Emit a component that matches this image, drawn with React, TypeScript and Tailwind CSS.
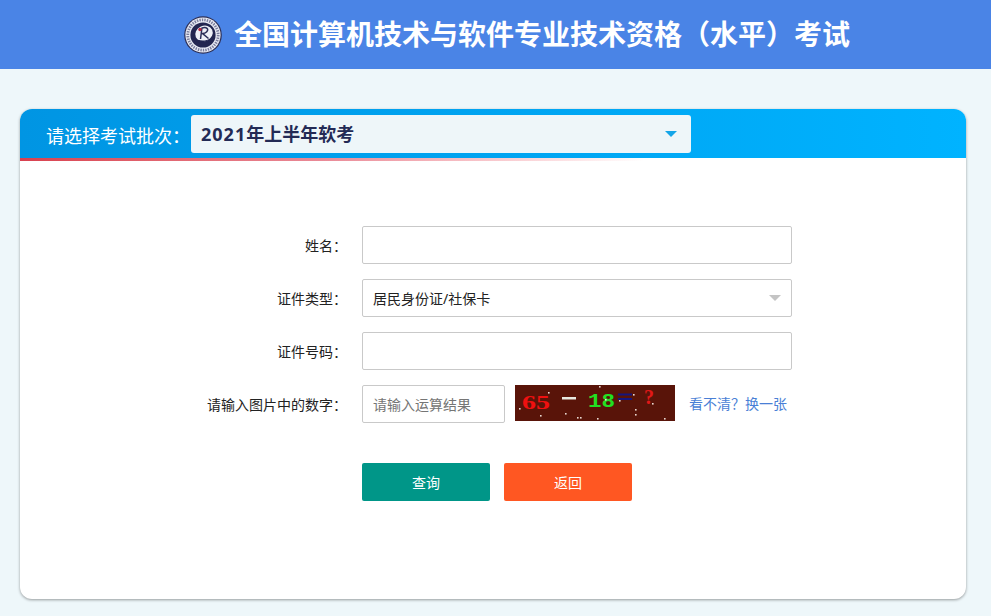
import React from "react";

const font = { fontFamily: '"Noto Sans", "Noto Sans CJK SC", sans-serif' };

function Logo() {
  return (
    <svg width="38" height="38" viewBox="0 0 38 38" className="shrink-0">
      <circle cx="19" cy="19" r="18.8" fill="#2d3058" />
      <circle cx="19" cy="19" r="17.6" fill="#e9ebf4" />
      <circle cx="19" cy="19" r="15.2" fill="none" stroke="#7a7d9c" strokeWidth="2.8" strokeDasharray="1.4 1.1" />
      <circle cx="19" cy="19" r="12.6" fill="#232650" />
      <ellipse cx="20" cy="17.5" rx="9" ry="7.6" fill="#eef0f7" transform="rotate(-25 20 17.5)" />
      <path d="M8.5 22 C12 28 24 29 30.5 17 C28 25 18 26.5 8.5 22Z" fill="#232650" />
      <path d="M18 11.5 L16.5 23 M18 12 C22.5 10.5 25.5 13 22.5 16 C21.5 17 20 17.4 18.4 17.4 L24.5 22.5" fill="none" stroke="#2b2e58" strokeWidth="1.5" />
      <circle cx="16" cy="13.5" r="1.7" fill="#b8283f" />
    </svg>
  );
}

function Captcha() {
  const dots = [[33,7],[90,14],[118,9],[104,15],[4,23],[50,28],[62,32],[82,33],[120,29],[149,33],[84,1],[137,18],[120,24],[25,30],[65,32]];
  return (
    <svg width="160" height="36" viewBox="0 0 160 36" className="shrink-0">
      <rect width="160" height="36" fill="#591409" />
      <text x="7" y="24" textLength="28" lengthAdjust="spacingAndGlyphs" fontFamily="Liberation Serif, serif" fontWeight="700" fontSize="18" fill="#f01010">65</text>
      <rect x="47" y="12" width="14" height="2.5" fill="#e8e8e0" />
      <text x="73" y="22" textLength="27" lengthAdjust="spacingAndGlyphs" fontFamily="Liberation Mono, monospace" fontWeight="700" fontSize="20" fill="#22e022">18</text>
      <rect x="103" y="8.5" width="14" height="2" fill="#15157e" />
      <rect x="103" y="13" width="14" height="2" fill="#15157e" />
      <text x="129" y="19" fontFamily="Liberation Serif, serif" fontWeight="700" fontSize="20" fill="#e01818">?</text>
      {dots.map(([x, y], i) => (
        <rect key={i} x={x} y={y} width="1.6" height="1.6" fill="#e8d8d0" />
      ))}
    </svg>
  );
}

function Row({ label, children }: { label: string; children: React.ReactNode }) {
  return (
    <div className="flex h-[38px] items-center">
      <label className="w-[327px] pt-[1px] text-right text-[14px] leading-[38px] text-[#222]">{label}</label>
      <div className="ml-[15px] flex items-center">{children}</div>
    </div>
  );
}

const inputCls =
  "h-[38px] rounded-[2px] border border-[#c9c9c9] bg-white px-[10px] text-[14px] text-[#222] outline-none";

export default function App() {
  return (
    <div className="min-h-[616px] bg-[#eef7fa]" style={font}>
      <header className="flex h-[69px] items-center bg-[#4a84e6] pl-[184px]">
        <Logo />
        <h1 className="ml-[12px] -mt-[2px] whitespace-nowrap text-[28px] font-bold leading-[38px] text-white">
          全国计算机技术与软件专业技术资格（水平）考试
        </h1>
      </header>

      <main className="px-[20px] pt-[40px]">
        <section className="h-[490px] w-[946px] overflow-hidden rounded-[12px] bg-white shadow-[0_1px_3px_rgba(0,0,0,0.38)]">
          <div className="flex h-[49px] items-start bg-gradient-to-r from-[#0095e3] to-[#00b3ff] pl-[26px] pt-[6px]">
            <span className="mt-[5px] text-[18px] leading-[32px] text-white">请选择考试批次：</span>
            <div className="ml-[1px] flex h-[38px] w-[500px] items-center justify-between rounded-[3px] bg-[#eef6f9] pl-[10px] pr-[14px]">
              <span className="text-[18px] font-bold text-[#232a55]">
                <span className="tracking-[1px]">2021</span>年上半年软考
              </span>
              <span className="h-0 w-0 border-x-[6px] border-t-[6px] border-x-transparent border-t-[#14a5e8]" />
            </div>
          </div>
          <div className="h-[3px] bg-gradient-to-r from-[#d8404f] via-[#e98a97] via-[32%] to-[#ffffff] to-[66%]" />

          <div className="flex flex-col gap-[15px] pt-[65px]">
            <Row label="姓名：">
              <input className={`${inputCls} w-[430px]`} />
            </Row>
            <Row label="证件类型：">
              <div className={`${inputCls} relative flex w-[430px] items-center pt-[1px]`}>
                居民身份证/社保卡
                <span className="absolute right-[10px] top-[15px] h-0 w-0 border-x-[6px] border-t-[6px] border-x-transparent border-t-[#c4c4c4]" />
              </div>
            </Row>
            <Row label="证件号码：">
              <input className={`${inputCls} w-[430px]`} />
            </Row>
            <Row label="请输入图片中的数字：">
              <input
                className={`${inputCls} w-[143px] placeholder:text-[#757575]`}
                placeholder="请输入运算结果"
              />
              <div className="ml-[10px] -mt-[2px]">
                <Captcha />
              </div>
              <a className="ml-[14px] -mt-[1px] whitespace-nowrap text-[14px] text-[#4a7fd6]">看不清？换一张</a>
            </Row>
          </div>

          <div className="ml-[342px] mt-[40px] flex gap-[14px]">
            <button className="h-[38px] w-[128px] rounded-[2px] bg-[#009688] pt-[1px] text-[14px] text-white">查询</button>
            <button className="h-[38px] w-[128px] rounded-[2px] bg-[#ff5722] pt-[1px] text-[14px] text-white">返回</button>
          </div>
        </section>
      </main>
    </div>
  );
}
